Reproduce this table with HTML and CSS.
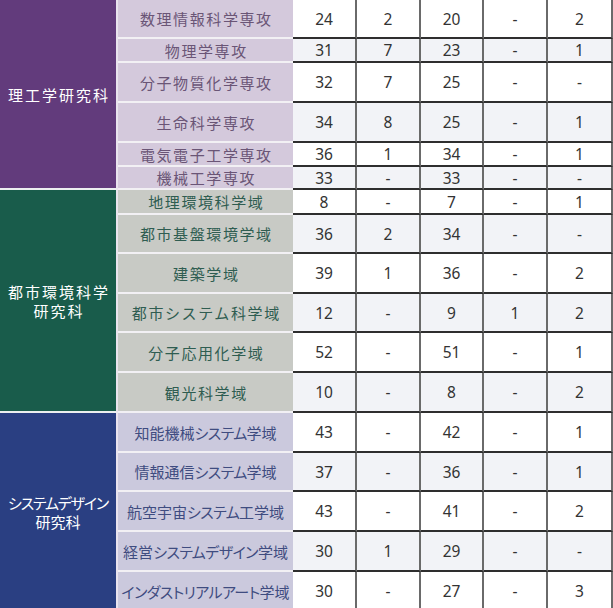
FILE: index.html
```html
<!DOCTYPE html>
<html lang="ja">
<head>
<meta charset="utf-8">
<title>研究科別 内訳</title>
<link rel="stylesheet" href="styles.css">
</head>
<body>
<div class="sheet">
  <div class="dept g1 span6">理工学研究科</div>
  <div class="sub g1">数理情報科学専攻</div><div class="num">24</div><div class="num">2</div><div class="num">20</div><div class="num">-</div><div class="num">2</div>
  <div class="sub g1">物理学専攻</div><div class="num alt">31</div><div class="num alt">7</div><div class="num alt">23</div><div class="num alt">-</div><div class="num alt">1</div>
  <div class="sub g1">分子物質化学専攻</div><div class="num">32</div><div class="num">7</div><div class="num">25</div><div class="num">-</div><div class="num">-</div>
  <div class="sub g1">生命科学専攻</div><div class="num alt">34</div><div class="num alt">8</div><div class="num alt">25</div><div class="num alt">-</div><div class="num alt">1</div>
  <div class="sub g1">電気電子工学専攻</div><div class="num">36</div><div class="num">1</div><div class="num">34</div><div class="num">-</div><div class="num">1</div>
  <div class="sub g1">機械工学専攻</div><div class="num alt">33</div><div class="num alt">-</div><div class="num alt">33</div><div class="num alt">-</div><div class="num alt">-</div>

  <div class="dept g2 span6"><span class="line">都市環境科学</span><span class="line">研究科</span></div>
  <div class="sub g2">地理環境科学域</div><div class="num">8</div><div class="num">-</div><div class="num">7</div><div class="num">-</div><div class="num">1</div>
  <div class="sub g2">都市基盤環境学域</div><div class="num alt">36</div><div class="num alt">2</div><div class="num alt">34</div><div class="num alt">-</div><div class="num alt">-</div>
  <div class="sub g2">建築学域</div><div class="num">39</div><div class="num">1</div><div class="num">36</div><div class="num">-</div><div class="num">2</div>
  <div class="sub g2">都市システム科学域</div><div class="num alt">12</div><div class="num alt">-</div><div class="num alt">9</div><div class="num alt">1</div><div class="num alt">2</div>
  <div class="sub g2">分子応用化学域</div><div class="num">52</div><div class="num">-</div><div class="num">51</div><div class="num">-</div><div class="num">1</div>
  <div class="sub g2">観光科学域</div><div class="num alt">10</div><div class="num alt">-</div><div class="num alt">8</div><div class="num alt">-</div><div class="num alt">2</div>

  <div class="dept g3 span5"><span class="line kana">システムデザイン</span><span class="line">研究科</span></div>
  <div class="sub g3">知能機械<span class="kana">システム</span>学域</div><div class="num">43</div><div class="num">-</div><div class="num">42</div><div class="num">-</div><div class="num">1</div>
  <div class="sub g3">情報通信<span class="kana">システム</span>学域</div><div class="num alt">37</div><div class="num alt">-</div><div class="num alt">36</div><div class="num alt">-</div><div class="num alt">1</div>
  <div class="sub g3">航空宇宙<span class="kana">システム</span>工学域</div><div class="num">43</div><div class="num">-</div><div class="num">41</div><div class="num">-</div><div class="num">2</div>
  <div class="sub g3">経営<span class="kana">システムデザイン</span>学域</div><div class="num alt">30</div><div class="num alt">1</div><div class="num alt">29</div><div class="num alt">-</div><div class="num alt">-</div>
  <div class="sub g3"><span class="kana">インダストリアルアート</span>学域</div><div class="num">30</div><div class="num">-</div><div class="num">27</div><div class="num">-</div><div class="num">3</div>
</div>
</body>
</html>
```

FILE: styles.css
```css
html, body {
  margin: 0;
  padding: 0;
  overflow: hidden;
  background: #ffffff;
}

.sheet {
  display: grid;
  grid-template-columns: 118px 175px 64px 64px 63px 64px 65px;
  grid-template-rows: 39px 24px 40px 40px 24px 23px 25px 39px 40px 39px 40px 40px 40px 39px 40px 40px 40px;
  width: 613px;
  height: 608px;
  overflow: hidden;
  font-family: "Noto Sans CJK JP", sans-serif;
}

.sheet > div {
  box-sizing: border-box;
  display: flex;
  align-items: center;
  justify-content: center;
  text-align: center;
}

.span6 { grid-row: span 6; }
.span5 { grid-row: span 5; }

.dept {
  flex-direction: column;
  color: #ffffff;
  font-size: 15px;
  line-height: 19px;
  letter-spacing: 2px;
  padding-left: 2px;
  border-right: 2px solid #e9e3ee;
  border-bottom: 2px solid #eceff0;
}

.dept .line {
  display: block;
  white-space: nowrap;
}

.dept.g1 { background: #623b7c; }
.dept.g2 { background: #195c4b; }
.dept.g3 {
  background: #2a3f82;
  letter-spacing: 0;
  padding-left: 0;
  font-feature-settings: "palt";
}

.dept.g3 .kana { letter-spacing: -1.2px; }

.sub {
  font-size: 15px;
  letter-spacing: 1.6px;
  padding-left: 1.6px;
  border-bottom: 2px solid #f2f0f4;
  white-space: nowrap;
}

.sub.g1 { background: #d4c9dc; color: #6a5576; }
.sub.g2 { background: #c8cac5; color: #2f5d51; }
.sub.g3 {
  background: #cbc9dd;
  color: #3f4c80;
  letter-spacing: 0;
  padding-left: 0;
  font-feature-settings: "palt";
}

.sub.g3 .kana { letter-spacing: -0.6px; }

.num {
  font-family: "Noto Sans", sans-serif;
  font-size: 15.5px;
  color: #333333;
  background: #ffffff;
  border-right: 2px solid #6a6a6a;
  border-bottom: 2px solid #2e2e2e;
}

.num.alt { background: #f2f3f7; }
```
